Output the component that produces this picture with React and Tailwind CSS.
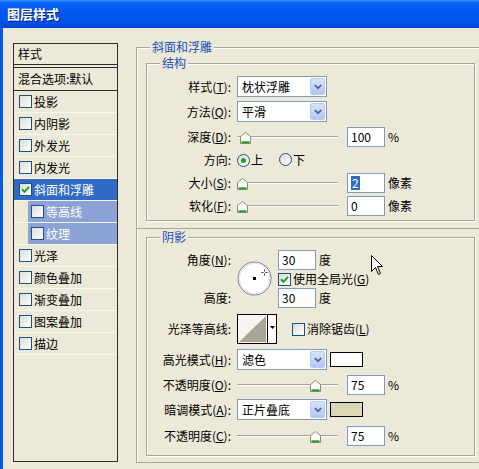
import React from "react";

function U({ children }) {
  return <span className="underline underline-offset-[1px]">{children}</span>;
}

function Check({ checked }) {
  return (
    <span className="inline-flex h-[13px] w-[13px] shrink-0 items-center justify-center border border-[#1C5180] bg-[linear-gradient(135deg,#DCDCD7,#FFFFFF)]">
      {checked && (
        <svg width="9" height="9" viewBox="0 0 9 9">
          <path d="M1 4.3 L3.5 6.8 L8 1.8" stroke="#21A121" strokeWidth="2" fill="none" />
        </svg>
      )}
    </span>
  );
}

function Radio({ checked }) {
  return (
    <span className="inline-flex h-[13px] w-[13px] shrink-0 items-center justify-center rounded-full border border-[#1C5180] bg-[linear-gradient(135deg,#DCDCD7,#FFFFFF)]">
      {checked && <span className="h-[5px] w-[5px] rounded-full bg-[#21A121]" />}
    </span>
  );
}

function Select({ text }) {
  return (
    <div className="flex h-[21px] w-[90px] shrink-0 items-center border border-[#7F9DB9] bg-white pl-[4px]">
      <span className="flex-1">{text}</span>
      <span className="mr-[1px] flex h-[17px] w-[15px] items-center justify-center rounded-[2px] border border-[#B9CBF3] bg-[linear-gradient(#D6E2FD,#B2C6F5)]">
        <svg width="8" height="6" viewBox="0 0 8 6">
          <path d="M0.8 1 L4 4.2 L7.2 1" stroke="#4D6185" strokeWidth="1.7" fill="none" />
        </svg>
      </span>
    </div>
  );
}

function Input({ children }) {
  return (
    <div className="flex h-[20px] w-[38px] shrink-0 items-center border border-[#7F9DB9] bg-white pl-[3px]">
      {children}
    </div>
  );
}

function Slider({ thumb }) {
  return (
    <div className="relative h-[2px] w-[101px] shrink-0 border-t border-b border-t-[#A3A297] border-b-white">
      <svg width="11" height="12" viewBox="0 0 11 12" className={`absolute top-[-5px] ${thumb}`}>
        <path d="M0.5 4.5 L5.5 0.5 L10.5 4.5 V11.5 H0.5 Z" fill="#FBFBF8" stroke="#8C8B82" />
        <path d="M1.5 10.3 H9.5" stroke="#21A121" strokeWidth="2" />
      </svg>
    </div>
  );
}

function Label({ children }) {
  return <div className="w-[84px] shrink-0 text-right">{children}</div>;
}

function Legend({ children }) {
  return (
    <span className="absolute left-[13px] top-[-8px] bg-[#ECE9D8] px-[2px] leading-[14px] text-[#2050B8]">
      {children}
    </span>
  );
}

const items = [
  { t: "投影" },
  { t: "内阴影" },
  { t: "外发光" },
  { t: "内发光" },
  { t: "斜面和浮雕", sel: true },
  { t: "等高线", sub: true },
  { t: "纹理", sub: true },
  { t: "光泽" },
  { t: "颜色叠加" },
  { t: "渐变叠加" },
  { t: "图案叠加" },
  { t: "描边" },
];

function LeftList() {
  return (
    <div className="ml-[10px] mt-[15px] flex h-[419px] w-[105px] shrink-0 flex-col border border-[#2B2B2B]">
      <div className="flex h-[20px] items-center pl-[4px]">样式</div>
      <div className="h-[1px] bg-[#2B2B2B]" />
      <div className="h-[2px]" />
      <div className="h-[1px] bg-[#2B2B2B]" />
      <div className="flex h-[23px] items-center border-b border-[#2B2B2B] pl-[4px]">混合选项:默认</div>
      {items.map((it) =>
        it.sub ? (
          <div key={it.t} className="flex h-[22px] border-b border-[#F6F5EF]">
            <div className="w-[14px] shrink-0" />
            <div className="flex flex-1 items-center bg-[#8DA3D8] pl-[3px] text-white">
              <Check />
              <span className="ml-[2px]">{it.t}</span>
            </div>
          </div>
        ) : it.sel ? (
          <div key={it.t} className="flex h-[22px] items-center border-b border-[#F6F5EF] bg-[#316AC5] pl-[5px] text-white">
            <Check checked />
            <span className="ml-[2px]">{it.t}</span>
          </div>
        ) : (
          <div key={it.t} className="flex h-[22px] items-center border-b border-[#F8F7F2] pl-[5px]">
            <Check />
            <span className="ml-[2px]">{it.t}</span>
          </div>
        )
      )}
    </div>
  );
}

function Dial() {
  return (
    <svg width="35" height="35" viewBox="0 0 35 35">
      <circle cx="17.5" cy="17.5" r="16.5" fill="#FFFFFF" stroke="#737F96" />
      <circle cx="17.5" cy="17.5" r="15.3" fill="none" stroke="#DDE0EA" />
      <rect x="16" y="16" width="3" height="3" fill="#000" />
      <path d="M27.5 8.5 V10.5 M27.5 12.5 V14.5 M24.5 11.5 H26.5 M28.5 11.5 H30.5" stroke="#333" strokeWidth="1" />
    </svg>
  );
}

function Contour() {
  return (
    <div className="flex h-[30px] w-[40px] shrink-0 border border-black bg-white">
      <svg width="29" height="28" viewBox="0 0 29 28" className="shrink-0">
        <rect x="0" y="0" width="29" height="28" fill="#F6F5F0" />
        <polygon points="1,27 28,1 28,27" fill="#A8A697" />
      </svg>
      <div className="flex flex-1 items-center justify-center border-l border-black">
        <svg width="5" height="3" viewBox="0 0 5 3" className="mb-[3px]">
          <polygon points="0,0 5,0 2.5,3" fill="#000" />
        </svg>
      </div>
    </div>
  );
}

function RightPanel() {
  return (
    <div className="ml-[18px] mt-[19px] flex w-[350px] shrink-0 flex-col">
      {/* outer group 1 */}
      <div className="relative h-[182px] border border-[#A9A696] pl-[9px] pt-[15px] shadow-[inset_1px_1px_0_#FFFFFF]">
        <Legend>斜面和浮雕</Legend>
        <div className="relative flex h-[158px] w-[329px] flex-col border border-[#A9A696] shadow-[inset_1px_1px_0_#FFFFFF,1px_1px_0_#FFFFFF]">
          <Legend>结构</Legend>
          <div className="mt-[12px] flex h-[21px] items-center">
            <Label>样式(<U>T</U>):</Label>
            <div className="ml-[6px]"><Select text="枕状浮雕" /></div>
          </div>
          <div className="mt-[4px] flex h-[21px] items-center">
            <Label>方法(<U>Q</U>):</Label>
            <div className="ml-[6px]"><Select text="平滑" /></div>
          </div>
          <div className="mt-[4px] flex h-[21px] items-center">
            <Label>深度(<U>D</U>):</Label>
            <div className="ml-[6px]"><Slider thumb="left-[3px]" /></div>
            <div className="ml-[9px]"><Input>100</Input></div>
            <span className="ml-[3px]">%</span>
          </div>
          <div className="mt-[3px] flex h-[20px] items-center">
            <Label>方向:</Label>
            <div className="ml-[6px] flex items-center">
              <Radio checked />
              <span className="ml-[1px]">上</span>
              <span className="ml-[16px]"><Radio /></span>
              <span className="ml-[1px]">下</span>
            </div>
          </div>
          <div className="mt-[2px] flex h-[21px] items-center">
            <Label>大小(<U>S</U>):</Label>
            <div className="ml-[6px]"><Slider thumb="left-[0px]" /></div>
            <div className="ml-[9px]">
              <Input><span className="bg-[#316AC5] px-[1px] text-white">2</span></Input>
            </div>
            <span className="ml-[3px]">像素</span>
          </div>
          <div className="mt-[2px] flex h-[21px] items-center">
            <Label>软化(<U>F</U>):</Label>
            <div className="ml-[6px]"><Slider thumb="left-[0px]" /></div>
            <div className="ml-[9px]"><Input>0</Input></div>
            <span className="ml-[3px]">像素</span>
          </div>
        </div>
      </div>

      {/* outer group 2 */}
      <div className="relative h-[234px] border-x border-b border-[#A9A696] pl-[9px] pt-[8px] shadow-[inset_1px_0_0_#FFFFFF]">
        <div className="relative flex h-[219px] w-[329px] flex-col border border-[#A9A696] shadow-[inset_1px_1px_0_#FFFFFF,1px_1px_0_#FFFFFF]">
          <Legend>阴影</Legend>
          <div className="mt-[12px] flex">
            <div className="flex w-[84px] shrink-0 flex-col">
              <div className="flex h-[20px] items-center justify-end">角度(<U>N</U>):</div>
              <div className="h-[18px]" />
              <div className="flex h-[20px] items-center justify-end">高度:</div>
            </div>
            <div className="ml-[6px] mt-[11px] shrink-0">
              <Dial />
            </div>
            <div className="ml-[6px] flex flex-col">
              <div className="flex h-[20px] items-center">
                <Input>30</Input>
                <span className="ml-[3px]">度</span>
              </div>
              <div className="flex h-[18px] items-center">
                <Check checked />
                <span className="ml-[2px]">使用全局光(<U>G</U>)</span>
              </div>
              <div className="flex h-[20px] items-center">
                <Input>30</Input>
                <span className="ml-[3px]">度</span>
              </div>
            </div>
          </div>
          <div className="mt-[6px] flex h-[30px] items-center">
            <Label>光泽等高线:</Label>
            <div className="ml-[6px]"><Contour /></div>
            <div className="ml-[15px] flex items-center">
              <Check />
              <span className="ml-[2px]">消除锯齿(<U>L</U>)</span>
            </div>
          </div>
          <div className="mt-[5px] flex h-[21px] items-center">
            <Label>高光模式(<U>H</U>):</Label>
            <div className="ml-[6px]"><Select text="滤色" /></div>
            <div className="ml-[3px] h-[15px] w-[33px] border border-black bg-white" />
          </div>
          <div className="mt-[5px] flex h-[20px] items-center">
            <Label>不透明度(<U>O</U>):</Label>
            <div className="ml-[6px]"><Slider thumb="left-[73px]" /></div>
            <div className="ml-[9px]"><Input>75</Input></div>
            <span className="ml-[3px]">%</span>
          </div>
          <div className="mt-[4px] flex h-[21px] items-center">
            <Label>暗调模式(<U>A</U>):</Label>
            <div className="ml-[6px]"><Select text="正片叠底" /></div>
            <div className="ml-[3px] h-[15px] w-[33px] border border-black bg-[#D9D7B5]" />
          </div>
          <div className="mt-[6px] flex h-[20px] items-center">
            <Label>不透明度(<U>C</U>):</Label>
            <div className="ml-[6px]"><Slider thumb="left-[73px]" /></div>
            <div className="ml-[9px]"><Input>75</Input></div>
            <span className="ml-[3px]">%</span>
          </div>
        </div>
      </div>
    </div>
  );
}

export default function App() {
  return (
    <div className="relative flex h-[469px] w-[479px] flex-col overflow-hidden bg-[#ECE9D8] font-['Noto_Sans_CJK_SC','Noto_Sans',sans-serif] text-[12px] leading-[14px] text-black">
      <div className="flex h-[28px] shrink-0 items-center bg-[linear-gradient(180deg,#3D95FF_0%,#0A66F5_9%,#0058EE_40%,#0054E9_80%,#0044CE_100%)] pl-[7px]">
        <span className="text-[13px] font-bold leading-[16px] text-white [text-shadow:1px_1px_0_#0A1E6E]">图层样式</span>
      </div>
      <div className="flex flex-1 border-l-[3px] border-l-[#0A5AE8]">
        <LeftList />
        <RightPanel />
      </div>
      <svg width="13" height="22" viewBox="0 0 13 22" className="absolute left-[371px] top-[255px]">
        <path d="M0.5 0.5 V16.5 L4.5 12.5 L7.5 19.5 L9.5 18.5 L6.5 11.5 H11.5 Z" fill="#FFFFFF" stroke="#000" />
      </svg>
    </div>
  );
}
